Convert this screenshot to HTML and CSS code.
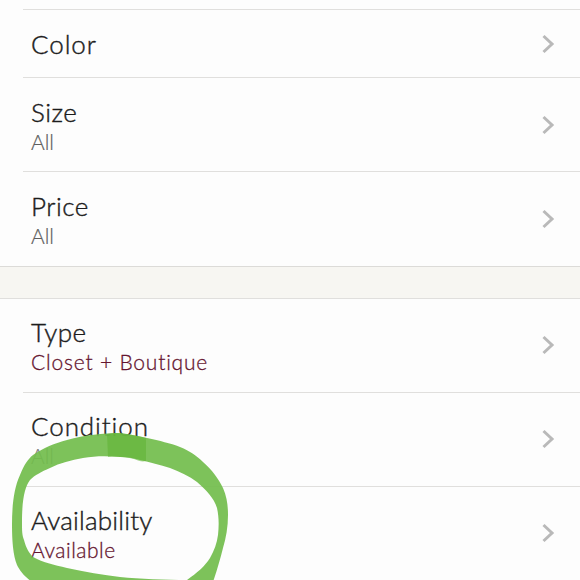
FILE: index.html
```html
<!DOCTYPE html>
<html lang="en">
<head>
<meta charset="utf-8">
<title>Filters</title>
<link rel="stylesheet" href="styles.css">
</head>
<body>
<main class="screen">
  <section class="group group-first">
    <div class="row row-single"><div class="text"><div class="title title-wide">Color</div></div><svg class="chev" viewBox="0 0 14 22"><path d="M2.5 3L11 11L2.5 19"/></svg></div>
    <div class="row"><div class="text"><div class="title">Size</div><div class="sub">All</div></div><svg class="chev" viewBox="0 0 14 22"><path d="M2.5 3L11 11L2.5 19"/></svg></div>
    <div class="row row-last"><div class="text"><div class="title">Price</div><div class="sub">All</div></div><svg class="chev" viewBox="0 0 14 22"><path d="M2.5 3L11 11L2.5 19"/></svg></div>
  </section>
  <div class="gap"></div>
  <section class="group group-lower">
    <div class="row row-top"><div class="text"><div class="title">Type</div><div class="sub sub-accent sub-long">Closet + Boutique</div></div><svg class="chev" viewBox="0 0 14 22"><path d="M2.5 3L11 11L2.5 19"/></svg></div>
    <div class="row"><div class="text"><div class="title title-wide">Condition</div><div class="sub sub-under">All</div></div><svg class="chev" viewBox="0 0 14 22"><path d="M2.5 3L11 11L2.5 19"/></svg></div>
    <div class="row row-end"><div class="text"><div class="title title-tight">Availability</div><div class="sub sub-accent">Available</div></div><svg class="chev" viewBox="0 0 14 22"><path d="M2.5 3L11 11L2.5 19"/></svg></div>
  </section>
  <svg class="ink" viewBox="0 0 580 580">
    <path class="ink-band" fill-rule="evenodd" d="M12 525C12 505 14 488 20 475C24 465 28 459 33 455C43 448 55 443 67 440C85 435 103 433 120 433C130 434 138 436 147 438C160 441 170 443 180 447C190 451 197 456 203 462C212 470 218 478 223 488C227 497 228 506 228 515C228 527 226 538 223 548C220 560 217 570 213 582L32 582C24 576 20 571 17 565C13 555 12 540 12 525ZM22 522C22 530 22 535 24 540C26 548 29 553 33 557C42 562 54 565 67 568C85 572 103 575 120 577C140 579 165 580 187 580C197 573 205 566 210 558C214 551 217 543 218 535C219 526 219 517 217 508C214 498 206 490 197 482C189 476 180 472 170 468C160 465 150 462 140 460C133 458 127 457 120 457C107 456 95 456 83 458C71 460 60 463 50 468C41 472 35 475 30 480C25 487 22 498 22 522Z"/>
    <path class="ink-overlap" d="M107 434C120 432 133 435 146 438L146 461C142 462 139 461 134 459C126 457 116 456 108 457Z"/>
  </svg>
</main>
</body>
</html>
```
FILE: styles.css
```css
* { box-sizing: border-box; }
html, body { margin: 0; padding: 0; }
body { width: 580px; height: 580px; overflow: hidden; background: #fdfdfd; }
.screen {
  position: relative;
  width: 580px;
  height: 580px;
  overflow: hidden;
  font-family: Lato, "Liberation Sans", sans-serif;
  color: #2b2b2b;
}
.group { background: #fdfdfd; padding-left: 23px; }
.group-first { padding-top: 9px; }
.row {
  display: flex;
  align-items: center;
  justify-content: space-between;
  height: 94px;
  padding: 3px 25px 0 8px;
  border-top: 1px solid #e0dfdd;
}
.group-lower .row { padding-top: 1px; }
.group-lower .row-top { border-top: 0; height: 93px; }
.row-single { height: 68px; padding-top: 0; }
.row-end { height: 95px; }
.row-last { height: 95px; }
.title {
  font-size: 26px;
  font-weight: 300;
  line-height: 30px;
  letter-spacing: 0.5px;
  color: #1c1c1c;
  -webkit-text-stroke: 0.4px #1c1c1c;
}
.title-wide { letter-spacing: 0.9px; }
.title-tight { letter-spacing: 0.2px; }
.sub {
  margin-top: 1px;
  font-size: 21px;
  font-weight: 300;
  line-height: 28px;
  color: #5f5f5f;
  -webkit-text-stroke: 0.2px #5f5f5f;
}
.sub-accent { color: #651530; letter-spacing: 0.5px; -webkit-text-stroke: 0.3px #651530; }
.sub-long { letter-spacing: 0.8px; }
.sub-under { opacity: 0.8; }
.chev { width: 14px; height: 22px; flex: none; margin-top: -3px; }
.row-single .chev { margin-top: 0; }
.chev path { fill: none; stroke: #b9b9b9; stroke-width: 3; }
.gap {
  height: 33px;
  background: #f7f6f2;
  border-top: 1px solid #dcdbd8;
  border-bottom: 1px solid #e0dfdd;
}
.ink { position: absolute; left: 0; top: 0; width: 580px; height: 580px; pointer-events: none; }
.ink-band { fill: #72bd4c; opacity: 0.92; }
.ink-overlap { fill: #5fb233; opacity: 0.55; }
```
